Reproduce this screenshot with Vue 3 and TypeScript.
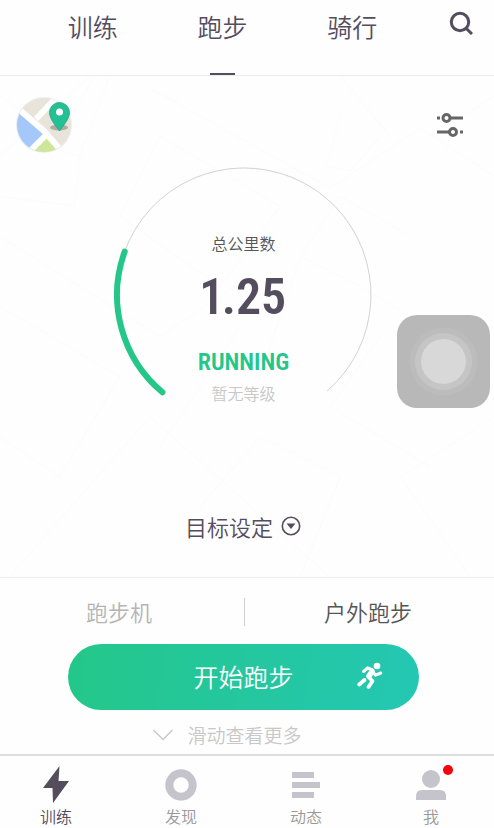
<script setup lang="ts">
import { computed, ref } from 'vue'

const sports = ['训练', '跑步', '骑行']
const activeSport = ref('跑步')

const modes = ['跑步机', '户外跑步']
const activeMode = ref('户外跑步')

type TabIcon = 'bolt' | 'ring' | 'feed' | 'user'
const tabs: { label: string; icon: TabIcon; dot?: boolean }[] = [
  { label: '训练', icon: 'bolt' },
  { label: '发现', icon: 'ring' },
  { label: '动态', icon: 'feed' },
  { label: '我', icon: 'user', dot: true },
]
const activeTab = ref('训练')

const totalKm = ref(1.25)
const kmText = computed(() => totalKm.value.toFixed(2))

const center = 132
const radius = 127
const point = (deg: number): string => {
  const a = (deg * Math.PI) / 180
  return `${(center + radius * Math.cos(a)).toFixed(1)} ${(center + radius * Math.sin(a)).toFixed(1)}`
}
const arc = (from: number, to: number): string =>
  `M${point(from)}A${radius} ${radius} 0 ${to - from > 180 ? 1 : 0} 1 ${point(to)}`
const trackPath = arc(130, 409)
const progressPath = arc(130, 200)
</script>

<template>
  <div class="app">
    <header class="top">
      <nav class="sports">
        <button
          v-for="s in sports"
          :key="s"
          type="button"
          class="sport"
          :class="{ active: s === activeSport }"
          @click="activeSport = s"
        >{{ s }}</button>
      </nav>
      <button type="button" class="search" aria-label="搜索">
        <svg width="24" height="24" viewBox="0 0 24 24" fill="none" stroke="#544d5e" stroke-width="3">
          <circle cx="11" cy="11" r="8.700" />
          <path d="M17 17.200L23 23" />
        </svg>
      </button>
    </header>

    <main class="map">
      <svg class="streets" viewBox="0 0 494 500" preserveAspectRatio="xMidYMid slice" fill="none" stroke="#fbfbfb">
        <path d="M0 80L90 0M10 500L150 340L330 500M150 12L330 112L420 52L494 100M95 0L60 60L0 20M160 60L280 130L220 210L120 140ZM0 230L120 300L60 400L0 360M110 0L80 80L20 60M80 80L75 130L0 120M250 330L300 180L360 210L494 290M300 180L340 120L410 160M200 430L260 360L340 400L300 500M340 0L390 60M400 400L494 340M400 400L470 500M430 60L494 20M0 160L160 260L250 200M340 40L326 90L350 95L380 60M160 370L240 250M380 260L330 330L430 390" />
      </svg>

      <div class="tools">
        <button type="button" class="icon-button" aria-label="地图">
          <svg width="56" height="56" viewBox="0 0 56 56">
            <defs>
              <clipPath id="map-disc"><circle cx="28" cy="28" r="27" /></clipPath>
            </defs>
            <circle cx="28" cy="28" r="28" fill="#ededed" />
            <g clip-path="url(#map-disc)">
              <path fill="#e8e4da" d="M0 0h56v56H0z" />
              <path fill="#a5c8fb" d="M-2 10L30 40L12 58H-2z" />
              <path fill="#cde69a" d="M31 39L50 58H10z" />
              <path fill="none" stroke="#fff" stroke-width="6" d="M-1 9L28 34L49 58M20 22L40 1M32 36L12 56" />
            </g>
            <ellipse cx="43" cy="30.500" rx="9" ry="3" fill="#77736a" opacity=".5" />
            <path fill="#24bf93" stroke="#1aab82" stroke-width=".8" d="M43.500 34C40 29 33.500 22 33.500 15.500a10 10 0 0 1 20 0C53.500 22 47 29 43.500 34z" />
            <circle cx="43.500" cy="15" r="3.500" fill="#fff" />
          </svg>
        </button>
        <button type="button" class="icon-button settings" aria-label="设置">
          <svg width="26" height="26" viewBox="0 0 26 26" fill="none" stroke="#666" stroke-width="3">
            <path d="M0 6h3M13 6h13M0 20h12M23 20h3" />
            <circle cx="9.500" cy="6" r="3.500" />
            <circle cx="16" cy="20" r="3.500" />
          </svg>
        </button>
      </div>

      <section class="gauge">
        <svg class="dial" viewBox="0 0 264 264" fill="none">
          <path :d="trackPath" stroke="#d2d2d2" />
          <path :d="progressPath" stroke="#24c789" stroke-width="6" stroke-linecap="round" />
        </svg>
        <div class="readout">
          <span class="caption">总公里数</span>
          <strong class="km">{{ kmText }}</strong>
          <span class="kind">RUNNING</span>
          <span class="level">暂无等级</span>
        </div>
      </section>

      <button type="button" class="goal">
        <span>目标设定</span>
        <svg width="20" height="20" viewBox="0 0 20 20">
          <circle cx="10" cy="10" r="8.700" fill="none" stroke="#544d5e" stroke-width="1.600" />
          <path fill="#544d5e" d="M5.500 7.500h9L10 13z" />
        </svg>
      </button>
    </main>

    <section class="launch">
      <div class="modes">
        <button
          v-for="m in modes"
          :key="m"
          type="button"
          class="mode"
          :class="{ active: m === activeMode }"
          @click="activeMode = m"
        >{{ m }}</button>
      </div>
      <button type="button" class="start">
        <span class="start-label">开始跑步</span>
        <svg class="runner" width="28" height="28" viewBox="0 0 28 28" fill="none" stroke="#fff" stroke-linecap="round" stroke-linejoin="round">
          <circle cx="21" cy="4" r="3.300" fill="#fff" stroke="none" />
          <path stroke-width="3" d="M7.500 9.500L11.500 6L16 7.500M17 10L19.500 13.200L24.800 11" />
          <path stroke-width="5.600" d="M16 9.500L13 14" />
          <path stroke-width="3.800" d="M12.500 15L16.500 19L12.500 25M8.500 18L3.200 22.500" />
        </svg>
      </button>
      <button type="button" class="more">
        <svg width="20" height="12" viewBox="0 0 20 12" fill="none" stroke="#c8c8c8" stroke-width="1.400">
          <path d="M.5 1L10 10.500L19.500 1" />
        </svg>
        <span>滑动查看更多</span>
      </button>
    </section>

    <nav class="tabs">
      <button
        v-for="t in tabs"
        :key="t.label"
        type="button"
        class="tab"
        :class="{ active: t.label === activeTab }"
        @click="activeTab = t.label"
      >
        <svg width="38" height="38" viewBox="0 0 38 38" fill="currentColor">
          <path v-if="t.icon === 'bolt'" d="M22.500 0L6 22h9.500L16 37L32 15H21.500z" />
          <circle v-else-if="t.icon === 'ring'" cx="19" cy="19" r="11.700" fill="none" stroke="currentColor" stroke-width="8" />
          <path v-else-if="t.icon === 'feed'" d="M5 6h22v6H5zM5 16h28v6H5zM5 26h22v6H5z" />
          <g v-else>
            <circle cx="19" cy="13" r="9" />
            <path d="M4 34v-4q0-6 6-6h18q6 0 6 6v4z" />
          </g>
        </svg>
        <span>{{ t.label }}</span>
        <i v-if="t.dot" class="dot"></i>
      </button>
    </nav>

    <button type="button" class="assist" aria-label="辅助触控">
      <svg width="93" height="93" viewBox="0 0 93 93">
        <circle cx="46.500" cy="46.500" r="34" fill="#bcbcbc" />
        <circle cx="46.500" cy="46.500" r="28.500" fill="#c5c5c5" />
        <circle cx="46.500" cy="46.500" r="22.500" fill="#d8d8d8" />
      </svg>
    </button>
  </div>
</template>

<style>
body {
  margin: 0;
  background: #fefefe;
}
</style>

<style scoped>
.app {
  position: relative;
  display: flex;
  flex-direction: column;
  min-height: 100vh;
  color: #544d5e;
  font-family: "Noto Sans CJK SC", sans-serif;
  font-weight: 350;
}

button {
  margin: 0;
  padding: 0;
  border: 0;
  background: none;
  color: inherit;
  font: inherit;
  cursor: pointer;
}

svg {
  display: block;
}

.top {
  display: flex;
  height: 75px;
  padding-left: 28px;
  border-bottom: 1px solid #ebebed;
}

.sports {
  display: grid;
  flex: 1;
  grid-template-columns: repeat(3, 1fr);
}

.sport {
  display: flex;
  flex-direction: column;
  align-items: center;
  justify-content: space-between;
  padding-top: 8px;
  font-size: 25px;
  line-height: 36px;
}

.sport::after {
  width: 25px;
  height: 2px;
  content: "";
}

.sport.active::after {
  background: #544d5e;
}

.search {
  display: flex;
  align-items: flex-start;
  justify-content: flex-end;
  width: 77px;
  padding: 11px 21px 0 0;
}

.map {
  position: relative;
  display: flex;
  flex: 1;
  flex-direction: column;
  align-items: center;
  padding-bottom: 33px;
  border-bottom: 1px solid #ededed;
}

.streets {
  position: absolute;
  inset: 0;
  width: 100%;
  height: 100%;
}

.tools,
.gauge,
.goal {
  position: relative;
}

.tools {
  display: flex;
  align-items: center;
  align-self: stretch;
  justify-content: space-between;
  padding: 21px 31px 0 16px;
}

.gauge {
  display: grid;
  justify-items: center;
  margin: 10px 7px 0 0;
}

.dial,
.readout {
  grid-area: 1 / 1;
}

.dial {
  width: 264px;
}

.readout {
  display: flex;
  flex-direction: column;
  align-items: center;
  padding-top: 68px;
}

.caption,
.level {
  font-size: 16px;
  line-height: 24px;
}

.caption {
  color: #555;
}

.level {
  color: #c8c8c8;
  line-height: 16px;
}

.km,
.kind {
  font-family: "Roboto Condensed", "Roboto", sans-serif;
  font-weight: 600;
}

.km {
  font-size: 50px;
  font-variant-numeric: proportional-nums;
  line-height: 84px;
}

.kind {
  color: #24c789;
  font-size: 24px;
  line-height: 46px;
}

.goal {
  display: flex;
  gap: 8px;
  align-items: center;
  margin: auto 8px 0 0;
  font-size: 22px;
  line-height: 36px;
}

.launch {
  padding: 20px 75px 5px 68px;
}

.modes {
  position: relative;
  display: flex;
  align-items: flex-start;
  justify-content: space-between;
  height: 28px;
}

.modes::before {
  position: absolute;
  left: 50%;
  width: 1px;
  height: 28px;
  background: #d0d0d0;
  content: "";
}

.mode {
  width: 102px;
  color: #b4b4b4;
  font-size: 22px;
  line-height: 26px;
}

.mode.active {
  color: #555;
}

.start {
  display: grid;
  align-items: center;
  width: 100%;
  height: 66px;
  margin-top: 18px;
  padding-bottom: 2px;
  border-radius: 33px;
  background: linear-gradient(100deg, #24c789, #24c7b3);
  color: #fff;
  font-size: 25px;
}

.start-label,
.runner {
  grid-area: 1 / 1;
}

.runner {
  justify-self: end;
  margin-right: 35px;
}

.more {
  display: flex;
  gap: 14px;
  align-items: center;
  margin: 11px auto 0;
  padding-right: 32px;
  color: #c8c8c8;
  font-size: 19px;
  line-height: 28px;
}

.tabs {
  display: flex;
  justify-content: space-between;
  padding: 10px 38px 0 31px;
  border-top: 2px solid #dedede;
}

.tab {
  position: relative;
  display: flex;
  flex-direction: column;
  align-items: center;
  width: 50px;
  color: #c5c4cc;
  font-size: 16px;
  line-height: 24px;
}

.tab span {
  color: #999;
}

.tab.active,
.tab.active span {
  color: #544d5e;
}

.dot {
  position: absolute;
  top: -1px;
  right: 3px;
  width: 10px;
  height: 10px;
  border-radius: 50%;
  background: #f8000c;
}

.assist {
  position: absolute;
  top: 315px;
  right: 4px;
  overflow: hidden;
  border-radius: 20px;
  background: #b8b8b8;
}
</style>
